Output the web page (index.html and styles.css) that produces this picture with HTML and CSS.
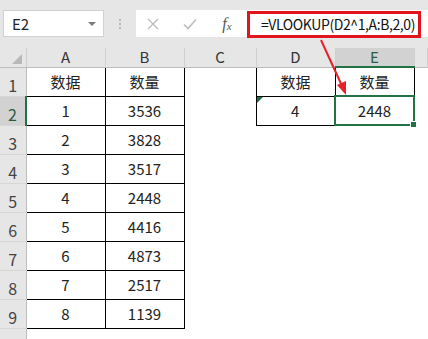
FILE: index.html
```html
<!DOCTYPE html>
<html lang="zh-CN">

<head>
    <meta charset="UTF-8" />
    <title>VLOOKUP</title>
    <link rel="stylesheet" href="styles.css">
</head>

<body>
    <div class="formula-bar">
        <div class="name-box">
            <span>E2</span>
            <span class="drop"></span>
        </div>
        <div class="grip"><i></i><i></i><i></i></div>
        <div class="formula-input">
            <span class="fbtn">
                <svg width="12" height="12" viewBox="0 0 12 12"><path d="M1 1 L11 11 M11 1 L1 11" stroke="#bdbdbd" stroke-width="1.4" fill="none" /></svg>
            </span>
            <span class="fbtn wide">
                <svg width="14" height="12" viewBox="0 0 14 12"><path d="M1 6.5 L5 10.5 L13 1.5" stroke="#bdbdbd" stroke-width="1.6" fill="none" /></svg>
            </span>
            <span class="fx">f<sub>x</sub></span>
            <span class="formula">=VLOOKUP(D2^1,A:B,2,0)</span>
        </div>
    </div>

    <table class="sheet">
        <colgroup>
            <col style="width:26px">
            <col style="width:79px">
            <col style="width:79px">
            <col style="width:72px">
            <col style="width:79px">
            <col style="width:79px">
            <col>
        </colgroup>
        <tr class="col-heads">
            <th class="corner"></th>
            <th>A</th>
            <th>B</th>
            <th>C</th>
            <th>D</th>
            <th class="active">E</th>
            <th></th>
        </tr>
        <tr>
            <th class="rh">1</th>
            <td class="b">数据</td>
            <td class="b">数量</td>
            <td></td>
            <td class="b">数据</td>
            <td class="b">数量</td>
            <td></td>
        </tr>
        <tr>
            <th class="rh active">2</th>
            <td class="b">1</td>
            <td class="b">3536</td>
            <td></td>
            <td class="b flag">4</td>
            <td class="b selected">2448</td>
            <td></td>
        </tr>
        <tr>
            <th class="rh">3</th>
            <td class="b">2</td>
            <td class="b">3828</td>
            <td></td><td></td><td></td><td></td>
        </tr>
        <tr>
            <th class="rh">4</th>
            <td class="b">3</td>
            <td class="b">3517</td>
            <td></td><td></td><td></td><td></td>
        </tr>
        <tr>
            <th class="rh">5</th>
            <td class="b">4</td>
            <td class="b">2448</td>
            <td></td><td></td><td></td><td></td>
        </tr>
        <tr>
            <th class="rh">6</th>
            <td class="b">5</td>
            <td class="b">4416</td>
            <td></td><td></td><td></td><td></td>
        </tr>
        <tr>
            <th class="rh">7</th>
            <td class="b">6</td>
            <td class="b">4873</td>
            <td></td><td></td><td></td><td></td>
        </tr>
        <tr>
            <th class="rh">8</th>
            <td class="b">7</td>
            <td class="b">2517</td>
            <td></td><td></td><td></td><td></td>
        </tr>
        <tr>
            <th class="rh">9</th>
            <td class="b">8</td>
            <td class="b">1139</td>
            <td></td><td></td><td></td><td></td>
        </tr>
        <tr class="last">
            <th class="rh"></th>
            <td></td><td></td><td></td><td></td><td></td><td></td>
        </tr>
    </table>

    <!-- annotation arrow from the formula to E2 -->
    <svg class="arrow" width="428" height="339" viewBox="0 0 428 339">
        <path d="M321 40 L343 88" stroke="#e8202a" stroke-width="2" fill="none" />
        <path d="M346 95 L337 85 L346 81 Z" fill="#e8202a" />
    </svg>
</body>

</html>
```

FILE: styles.css
```css
body {
    margin: 0;
    font-family: "Noto Sans CJK SC", "Noto Sans", sans-serif;
    background-color: #fff;
    width: 428px;
    height: 339px;
    overflow: hidden;
    position: relative;
}

/* top formula bar */
.formula-bar {
    display: flex;
    align-items: flex-start;
    height: 48px;
    background-color: #e6e6e6;
    box-sizing: border-box;
    padding-top: 10px;
}

.name-box {
    margin-left: 3px;
    width: 101px;
    height: 27px;
    box-sizing: border-box;
    background: #fff;
    border: 1px solid #d2d2d2;
    display: flex;
    align-items: center;
    justify-content: space-between;
    padding: 0 7px 0 8px;
    font-size: 15px;
    color: #222;
}

.drop {
    width: 0;
    height: 0;
    border-left: 4px solid transparent;
    border-right: 4px solid transparent;
    border-top: 4px solid #7a7a7a;
}

.grip {
    width: 32px;
    height: 27px;
    display: flex;
    flex-direction: column;
    align-items: center;
    justify-content: center;
    gap: 2px;
}

.grip i {
    display: block;
    width: 2px;
    height: 2px;
    background: #b8b8b8;
}

.formula-input {
    flex: 1;
    height: 27px;
    background: #fff;
    display: flex;
    align-items: center;
}

.fbtn {
    width: 34px;
    display: flex;
    justify-content: center;
}

.fbtn.wide {
    width: 40px;
}

.fx {
    width: 34px;
    text-align: center;
    font-family: "Liberation Serif", serif;
    font-style: italic;
    font-size: 16px;
    color: #555;
}

.fx sub {
    font-size: 11px;
    vertical-align: -1px;
}

.formula {
    margin-left: 3px;
    margin-top: 1px;
    width: 174px;
    height: 27px;
    box-sizing: border-box;
    border: 3px solid #e2151f;
    padding-left: 11px;
    font-size: 14px;
    letter-spacing: -0.4px;
    line-height: 21px;
    color: #111;
    white-space: nowrap;
    overflow: hidden;
}

/* sheet grid */
.sheet {
    table-layout: fixed;
    border-collapse: collapse;
    width: 428px;
}

.sheet tr {
    height: 29px;
}

.sheet th,
.sheet td {
    padding: 0;
    font-weight: normal;
    font-size: 15px;
    line-height: 18px;
    color: #222;
    text-align: center;
}

.sheet tr.col-heads {
    height: 19px;
}

.col-heads th {
    background: #e6e6e6;
    border-right: 1px solid #cfcfcf;
    border-bottom: 1px solid #bdbdbd;
    font-size: 15px;
    line-height: 16px;
    color: #333;
    vertical-align: middle;
}

.col-heads th.active {
    background: #d2d2d2;
    border-bottom: 2px solid #217346;
    color: #2d5a40;
}

.corner {
    position: relative;
}

.corner::after {
    content: "";
    position: absolute;
    right: 4px;
    bottom: 3px;
    border-left: 10px solid transparent;
    border-bottom: 10px solid #b8b8b8;
}

.sheet .rh {
    background: #e6e6e6;
    border-right: 1px solid #bdbdbd;
    border-bottom: 1px solid #d6d6d6;
    vertical-align: bottom;
    font-size: 16px;
    padding-bottom: 2px;
    color: #444;
}

.sheet .rh.active {
    background: #d2d2d2;
    border-right: 2px solid #217346;
    color: #2d5a40;
}

.b {
    border: 1px solid #000;
}

.flag {
    position: relative;
}

.flag::before {
    content: "";
    position: absolute;
    left: 0;
    top: 0;
    border-top: 6px solid #1e7145;
    border-right: 6px solid transparent;
}

.sheet .selected {
    position: relative;
    border: 2px solid #217346;
}

.selected::after {
    content: "";
    position: absolute;
    right: -4px;
    bottom: -4px;
    width: 5px;
    height: 5px;
    background: #217346;
    border: 1px solid #fff;
}

.arrow {
    position: absolute;
    left: 0;
    top: 0;
    pointer-events: none;
}
```
